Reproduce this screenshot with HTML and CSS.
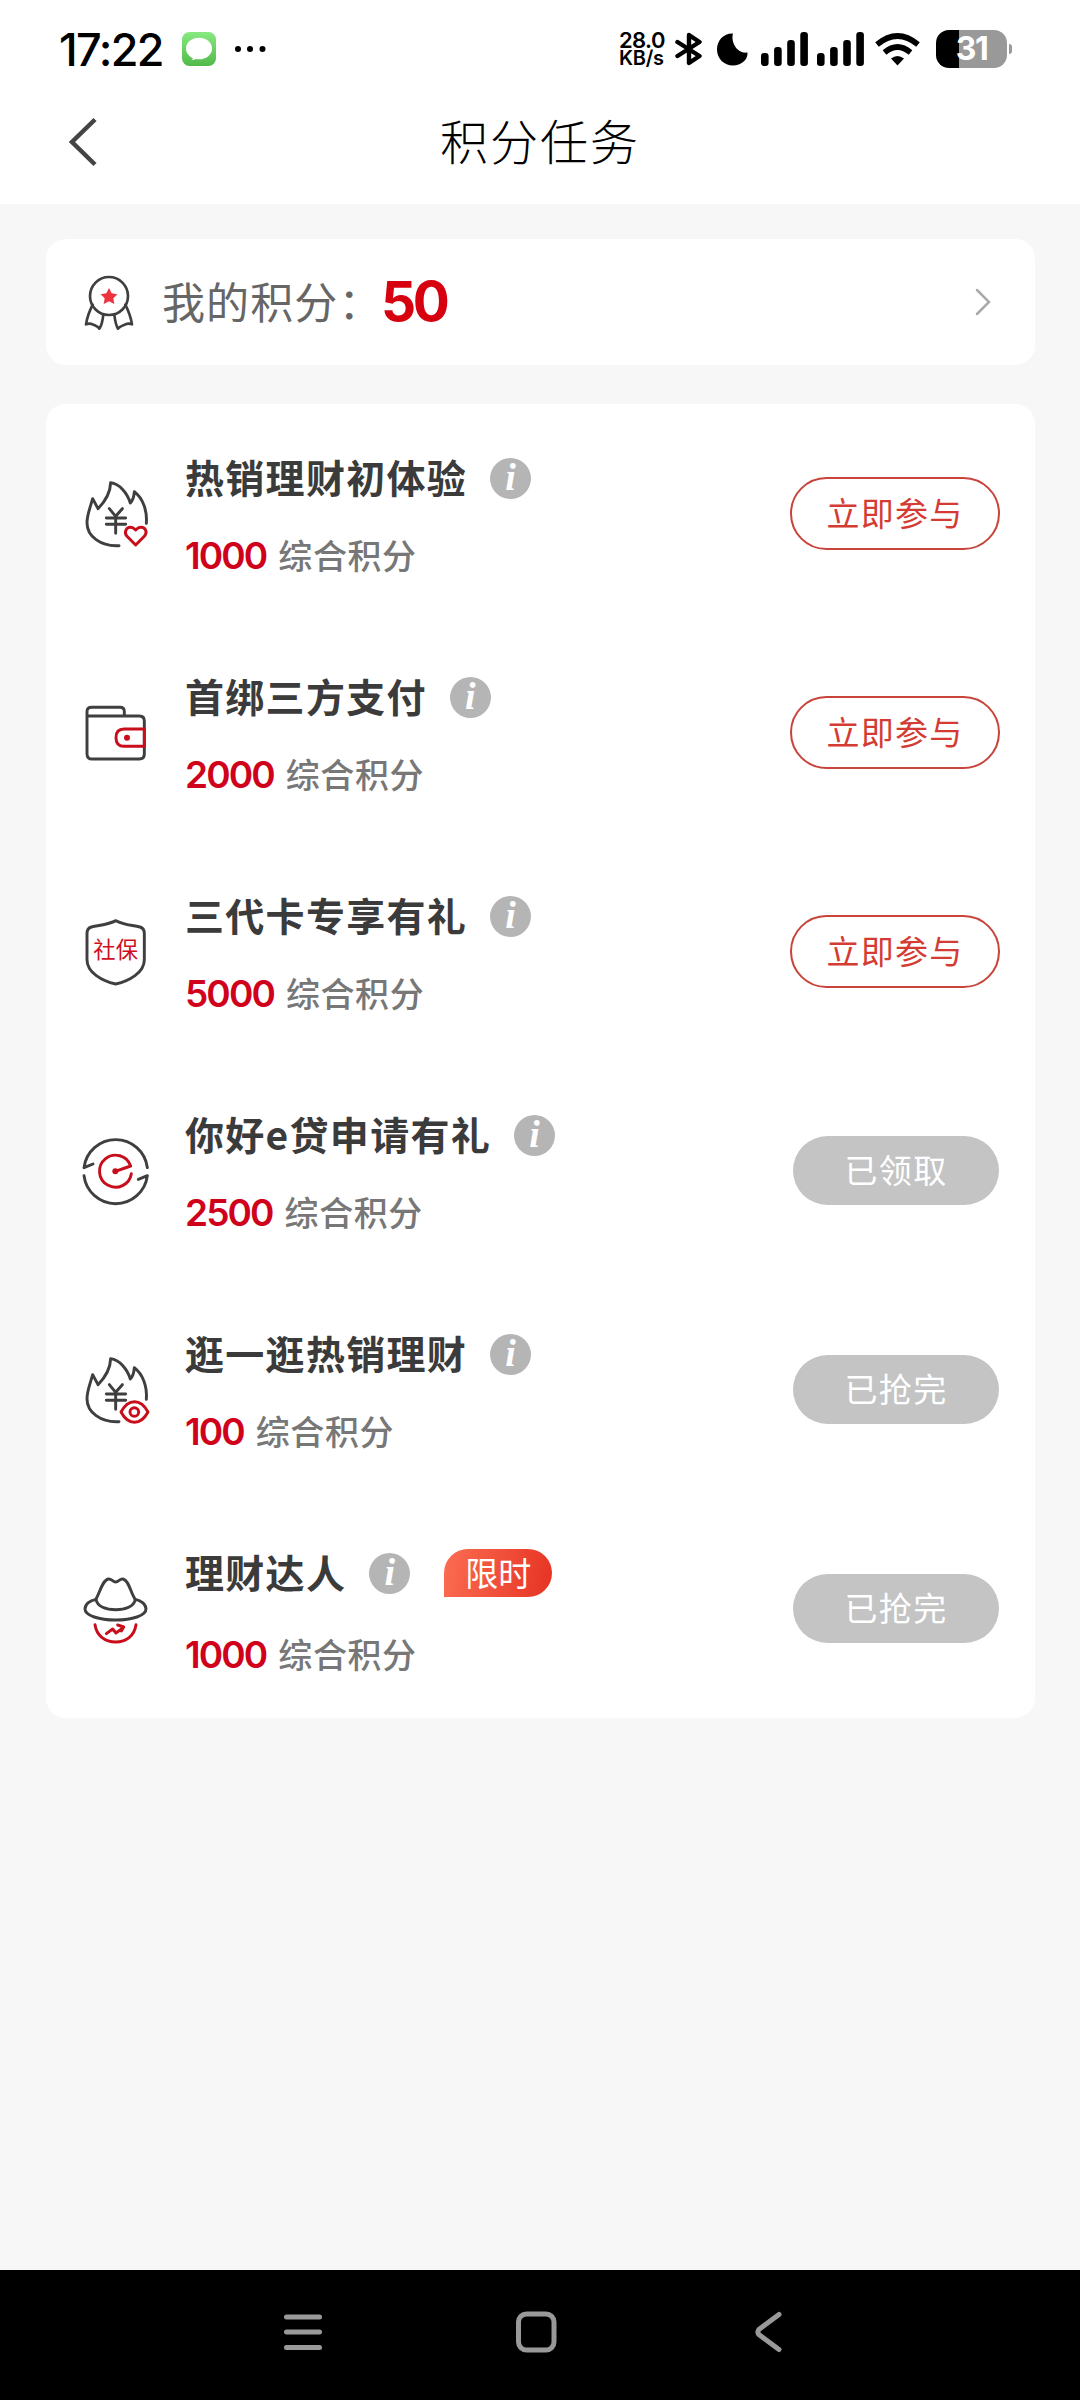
FILE: index.html
```
<!DOCTYPE html>
<html lang="zh-CN">
<head>
  <meta charset="UTF-8" />
  <meta name="viewport" content="width=device-width, initial-scale=1" />
  <title>积分任务</title>
  <link rel="stylesheet" href="styles.css">
</head>
<body>
  <!-- Status bar -->
  <div class="status-bar">
    <span class="time">17:22</span>
    <svg class="msg-icon" viewBox="0 0 34 34">
      <defs>
        <linearGradient id="msg" x1="0" y1="0" x2="0" y2="1">
          <stop offset="0" stop-color="#86ea80" />
          <stop offset="1" stop-color="#52b94b" />
        </linearGradient>
      </defs>
      <rect width="34" height="34" rx="7.5" fill="url(#msg)" />
      <ellipse cx="17" cy="16.5" rx="13" ry="10.8" fill="#fff" />
      <path d="M11 24c.3 2-.3 3-1.400 4 3 0 5-1 6.400-2.500z" fill="#fff" />
    </svg>
    <svg class="dots" viewBox="0 0 32 8">
      <circle cx="4" cy="4" r="3" /><circle cx="16" cy="4" r="3" /><circle cx="28.500" cy="4" r="3" />
    </svg>

    <div class="status-right">
      <div class="speed"><span class="speed-num">28.0</span><span class="speed-unit">KB/s</span></div>
      <svg class="bluetooth" viewBox="0 0 27 34">
        <path d="M2.500 10 24.500 24 14 31V3l10.500 7L2.500 24" fill="none" stroke="#000" stroke-width="4.400" stroke-linecap="round" stroke-linejoin="round" />
      </svg>
      <svg class="moon" viewBox="0 0 31 33">
        <path d="M16 .500C13.500 9 20 21 30.500 19.500 31 27 24 32.500 16 32.500 7 32.500 0 25.500 0 16.500 0 7 7 0 16 .500z" />
      </svg>
      <svg class="signal" viewBox="0 0 47 34">
        <rect x="0" y="21" width="7.600" height="13" rx="3.200" /><rect x="13.100" y="15" width="7.600" height="19" rx="3.200" /><rect x="26.200" y="8" width="7.600" height="26" rx="3.200" /><rect x="39.300" y="0" width="7.600" height="34" rx="3.200" />
      </svg>
      <svg class="signal second" viewBox="0 0 47 34">
        <rect x="0" y="21" width="7.600" height="13" rx="3.200" /><rect x="13.100" y="15" width="7.600" height="19" rx="3.200" /><rect x="26.200" y="8" width="7.600" height="26" rx="3.200" /><rect x="39.300" y="0" width="7.600" height="34" rx="3.200" />
      </svg>
      <svg class="wifi" viewBox="0 0 45 33">
        <path d="M2 11.500Q22.500-5.500 43 11.500M9.500 19.500Q22.500 8.500 35.500 19.500" fill="none" stroke="#000" stroke-width="5.600" />
        <path d="M16 25.500Q22.500 20.500 29 25.500L22.500 32.500z" />
      </svg>
      <div class="battery"><span class="battery-level">31</span></div>
      <i class="battery-nub"></i>
    </div>
  </div>

  <header>
    <svg class="back" viewBox="0 0 30 50"><path d="M27 2.500 4 25 27 47.500" fill="none" stroke="#444" stroke-width="4.500" /></svg>
    <h1>积分任务</h1>
  </header>

  <main>
    <!-- My points -->
    <section class="points-card">
      <svg class="medal" viewBox="0 0 150 170">
        <path d="M26 92C18 108 10 124 6 151 15 146 24 150 28 152 35 155 42 157 46 164 52 156 56 140 58 122M124 92C132 108 140 124 144 151 135 146 126 150 122 152 115 155 108 157 102 164 97 156 93 140 91 122" class="line" />
        <circle cx="75" cy="66" r="57" class="line" />
        <path d="M75 42 83 58 100 61 88 73 91 90 75 82 59 90 62 73 50 61 67 58z" class="star" />
      </svg>
      <span class="points-label">我的积分：</span>
      <span class="points-value">50</span>
      <svg class="arrow" viewBox="0 0 16 28"><path d="M2 2 14 14 2 26" fill="none" stroke="#aaa" stroke-width="2.500" stroke-linecap="round" /></svg>
    </section>

    <!-- Task list -->
    <section class="task-card">
      <div class="task">
        <svg class="task-icon" viewBox="60 54 216 216">
          <path class="line" d="M177 257C122 260 81 229 81 188 81 164 91 142 98 116L114 146C139 121 151 96 152 68 178 71 202 99 211 129 220 120 222 110 223 95 249 115 262 152 259 190" />
          <path class="line" d="M148 146 167 169 187 146M167 169V220M139 174H197M139 193H197" />
          <path class="line red" d="M227 255 201 229C190 216 200 201 212 202 219 202 223 206 227 210 231 206 235 202 242 202 256 201 264 216 253 229z" />
        </svg>
        <div class="task-text">
          <div class="task-title"><span>热销理财初体验</span><i class="info">i</i></div>
          <div class="task-points"><b>1000</b>综合积分</div>
        </div>
        <button class="btn">立即参与</button>
      </div>

      <div class="task">
        <svg class="task-icon" viewBox="60 51 216 216">
          <path class="line" d="M81 108V95Q81 82 95 82H180Q193 82 193 95V107M81 108H238Q253 108 253 123V222Q253 237 238 237H97Q81 237 81 221z" />
          <path class="line red" d="M253 147H192Q168 147 168 173T192 199H253z" />
          <circle cx="201" cy="173" r="9" class="fill-red" />
        </svg>
        <div class="task-text">
          <div class="task-title"><span>首绑三方支付</span><i class="info">i</i></div>
          <div class="task-points"><b>2000</b>综合积分</div>
        </div>
        <button class="btn">立即参与</button>
      </div>

      <div class="task">
        <svg class="task-icon" viewBox="60 48 216 216">
          <path class="line" d="M168 62C143 75 118 75 94 81 84 84 81 90 81 101V179C81 218 127 243 167 252 207 243 253 218 253 179V101C253 90 250 84 240 81 217 75 192 75 168 62z" />
          <text x="100" y="173" class="shield-text">社保</text>
        </svg>
        <div class="task-text">
          <div class="task-title"><span>三代卡专享有礼</span><i class="info">i</i></div>
          <div class="task-points"><b>5000</b>综合积分</div>
        </div>
        <button class="btn">立即参与</button>
      </div>

      <div class="task">
        <svg class="task-icon" viewBox="60 45 216 216">
          <path class="line" d="M99 132 72 143A95.700 95.700 0 0 1 262 143M235 178 262 167A95.700 95.700 0 0 1 72 167" />
          <path class="line red" d="M166 154 212 138A48 48 0 1 0 214 161" />
          <circle cx="166" cy="154" r="9" class="fill-red" />
        </svg>
        <div class="task-text">
          <div class="task-title"><span>你好e贷申请有礼</span><i class="info">i</i></div>
          <div class="task-points"><b>2500</b>综合积分</div>
        </div>
        <button class="btn done">已领取</button>
      </div>

      <div class="task">
        <svg class="task-icon" viewBox="60 42 216 216">
          <path class="line" d="M177 245C122 248 81 217 81 176 81 152 91 130 98 104L114 134C139 109 151 84 152 56 178 59 202 87 211 117 220 108 222 98 223 83 249 103 262 140 259 178" />
          <path class="line" d="M148 134 167 157 187 134M167 157V208M139 162H197M139 181H197" />
          <path class="line red" d="M183 216C205 175 242 175 264 216 242 257 205 257 183 216z" />
          <circle cx="223" cy="216" r="13" class="line red" />
        </svg>
        <div class="task-text">
          <div class="task-title"><span>逛一逛热销理财</span><i class="info">i</i></div>
          <div class="task-points"><b>100</b>综合积分</div>
        </div>
        <button class="btn done">已抢完</button>
      </div>

      <div class="task limited">
        <svg class="task-icon" viewBox="60 129 216 216">
          <path class="line" d="M107 209C120 187 127 151 145 147 154 145 158 156 167 156S180 145 189 147C207 151 211 187 226 209" />
          <path class="line" d="M108 208C114 250 220 250 226 208 244 211 258 224 258 237 258 257 216 270 167 270S75 257 75 237C75 224 88 211 108 208z" />
          <path class="line red" d="M105 284C110 318 136 336 167 336S223 318 228 284M139 311 158 297 168 309 191 292M173 285 191 291 184 303" />
        </svg>
        <div class="task-text">
          <div class="task-title"><span>理财达人</span><i class="info">i</i><em class="tag">限时</em></div>
          <div class="task-points"><b>1000</b>综合积分</div>
        </div>
        <button class="btn done">已抢完</button>
      </div>
    </section>
  </main>

  <!-- System navigation -->
  <nav>
    <svg class="nav-icon" viewBox="0 0 44 44"><path d="M5.500 7H38.500M5.500 22H38.500M5.500 37.500H38.500" /></svg>
    <svg class="nav-icon" viewBox="0 0 44 44"><rect x="4.500" y="4" width="35.500" height="36" rx="8" /></svg>
    <svg class="nav-icon" viewBox="0 0 44 44"><path d="M32 4.500 12.500 19Q9 22 12.500 25L32 39.500" /></svg>
  </nav>
</body>
</html>
```
FILE: styles.css
```
* {
  box-sizing: border-box;
}

body {
  margin: 0;
  width: 1080px;
  height: 2400px;
  display: flex;
  flex-direction: column;
  background: #f7f7f7;
  color: #3b3b3b;
  font-family: "Noto Sans CJK SC", sans-serif;
}

svg {
  display: block;
  flex-shrink: 0;
}

/* Status bar */
.status-bar {
  display: flex;
  align-items: center;
  height: 98px;
  padding: 0 68px 0 59px;
  background: #fff;
  color: #000;
  font-family: "Inter", sans-serif;
}

.time {
  width: 123px;
  font-size: 45px;
  font-weight: 500;
  letter-spacing: -1.6px;
}

.msg-icon {
  width: 34px;
  height: 34px;
}

.dots {
  width: 32px;
  height: 8px;
  margin-left: 18px;
}

.status-right {
  display: flex;
  align-items: center;
  margin-left: auto;
}

.speed {
  display: flex;
  flex-direction: column;
  width: 47px;
  margin-right: 9px;
  font-weight: 600;
  line-height: 18px;
  white-space: nowrap;
}

.speed-num {
  font-size: 22px;
  letter-spacing: -0.6px;
}

.speed-unit {
  font-size: 20px;
  letter-spacing: -0.3px;
}

.bluetooth {
  width: 27px;
  height: 34px;
}

.moon {
  width: 31px;
  height: 33px;
  margin: 0 13px 0 15px;
}

.signal {
  width: 47px;
  height: 34px;
}

.second {
  margin: 0 11px 0 9px;
}

.wifi {
  width: 45px;
  height: 33px;
}

.battery {
  width: 71px;
  height: 38px;
  margin-left: 16px;
  border-radius: 13px;
  background: linear-gradient(90deg, #000 23px, #999 23px);
  color: #fff;
  font-size: 32px;
  font-weight: 700;
  line-height: 38px;
  text-align: center;
}

.battery-level {
  letter-spacing: -1.5px;
}

.battery-nub {
  width: 3px;
  height: 10px;
  margin-left: 2px;
  border-radius: 0 3px 3px 0;
  background: #999;
}

/* Title bar */
header {
  display: grid;
  grid-template-columns: 100px 1fr 100px;
  align-items: center;
  height: 106px;
  padding-bottom: 18px;
  background: #fff;
}

.back {
  width: 30px;
  height: 50px;
  margin-left: 68px;
}

h1 {
  margin: 0;
  padding-bottom: 6px;
  color: #000;
  font-size: 48px;
  font-weight: 300;
  line-height: 74px;
  letter-spacing: 2px;
  text-align: center;
}

main {
  flex: 1;
  padding: 35px 45px 0 46px;
}

/* Cards */
.points-card {
  display: flex;
  align-items: center;
  height: 126px;
  padding: 0 44px 0 38px;
  border-radius: 20px;
  background: #fff;
}

.medal {
  width: 50px;
  height: 56.7px;
}

.line {
  fill: none;
  stroke: #3f3f3f;
  stroke-width: 8.8;
  stroke-linecap: round;
  stroke-linejoin: round;
}

.medal .line {
  stroke-width: 8;
}

.line.red {
  stroke: #c80d1b;
}

.star {
  fill: #ee3340;
}

.fill-red {
  fill: #c80d1b;
}

.points-label {
  width: 219px;
  margin-left: 28px;
  padding-bottom: 5px;
  color: #666;
  font-size: 43px;
  letter-spacing: 1.1px;
  white-space: nowrap;
}

.points-value {
  padding-bottom: 2px;
  color: #d7000f;
  font-family: "Inter", sans-serif;
  font-size: 55px;
  font-weight: 700;
  letter-spacing: -3.5px;
}

.arrow {
  width: 16px;
  height: 28px;
  margin-left: auto;
}

.task-card {
  margin-top: 39px;
  border-radius: 20px;
  background: #fff;
}

.task {
  display: flex;
  align-items: center;
  height: 219px;
  padding: 0 35px 0 34px;
}

.task-icon {
  width: 72px;
  height: 72px;
}

.task-text {
  flex: 1;
  align-self: flex-start;
  margin-left: 33px;
  padding-top: 44px;
}

.task-title {
  display: flex;
  align-items: center;
  height: 60px;
  font-size: 39px;
  font-weight: 700;
  letter-spacing: 1.3px;
}

.task-title span {
  padding-bottom: 5px;
}

.info {
  width: 41px;
  height: 41px;
  margin-left: 23px;
  border-radius: 50%;
  background: #b5b5b5;
  color: #fff;
  font: italic bold 38px/39px "Liberation Serif", serif;
  letter-spacing: 0;
  text-align: center;
}

.tag {
  width: 108px;
  height: 48px;
  margin-left: 34px;
  border-radius: 24px 24px 24px 0;
  background: linear-gradient(100deg, #fb6d52, #e63323);
  color: #fff;
  font-size: 33px;
  font-style: normal;
  font-weight: 400;
  line-height: 47px;
  letter-spacing: 0;
  text-align: center;
}

.task-points {
  margin-top: 22px;
  height: 50px;
  color: #777;
  font-size: 34px;
  font-weight: 500;
  line-height: 50px;
  letter-spacing: 0.6px;
}

.limited .task-points {
  margin-top: 26px;
}

.task-points b {
  margin-right: 12px;
  color: #d0021b;
  font-family: "Inter", sans-serif;
  font-size: 37px;
  font-weight: 600;
  letter-spacing: -1.9px;
}

.shield-text {
  fill: #d0101e;
  font-size: 67px;
}

.btn {
  width: 210px;
  height: 73px;
  padding: 0 0 4px;
  border: 2px solid #c9443b;
  border-radius: 37px;
  background: #fff;
  color: #d43c33;
  font-family: "Noto Sans CJK SC", sans-serif;
  font-size: 33px;
  line-height: 62px;
  letter-spacing: 1.3px;
}

.done {
  width: 206px;
  height: 69px;
  margin-right: 1px;
  border: none;
  background: #c4c4c4;
  color: #fff;
}

/* System navigation */
nav {
  display: flex;
  justify-content: center;
  gap: 189px;
  height: 130px;
  padding: 40px 8px 0 0;
  background: #000;
}

.nav-icon {
  width: 44px;
  height: 44px;
  fill: none;
  stroke: #999;
  stroke-width: 5;
  stroke-linecap: round;
  stroke-linejoin: round;
}
```
